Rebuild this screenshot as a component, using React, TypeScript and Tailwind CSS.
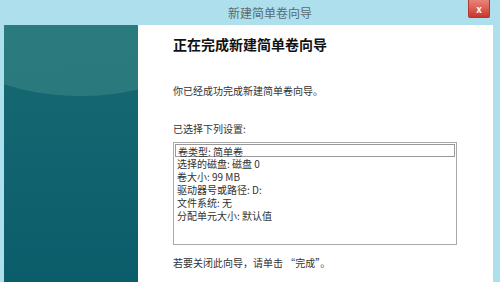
import React from "react";

const rows = ["卷类型: 简单卷", "选择的磁盘: 磁盘 0", "卷大小: 99 MB", "驱动器号或路径: D:", "文件系统: 无", "分配单元大小: 默认值"];

export default function App() {
  return (
    <div
      className="w-[500px] h-[282px] overflow-hidden bg-[#aedfec] flex flex-col"
      style={{ fontFamily: '"Microsoft YaHei", "Noto Sans CJK SC", "Liberation Sans", sans-serif' }}
    >
      <div className="h-[25px] flex items-center relative shrink-0">
        <div className="flex-1 text-center text-[12px] text-[#5a6a70] pl-[40px]">新建简单卷向导</div>
        <div className="absolute right-[10px] top-0 w-[22px] h-[18px] bg-gradient-to-b from-[#e8837a] to-[#c9342a] rounded-b-[2px] flex items-center justify-center border border-[#b03a30] border-t-0">
          <span className="text-white text-[10px] font-bold leading-none">x</span>
        </div>
      </div>
      <div className="flex-1 flex pl-[4px] pr-[7px]">
        <div className="w-[134px] shrink-0 relative overflow-hidden bg-gradient-to-b from-[#176a73] to-[#0c5d6b]">
          <div className="absolute left-[-120px] top-[-260px] w-[420px] h-[330px] rounded-[50%] bg-gradient-to-b from-[#2f7e80] to-[#2a7a7d] -rotate-[8deg]" />
        </div>
        <div className="flex-1 bg-white pl-[35px] pr-[36px] pt-[10px] text-[#333] text-[10px]">
          <div className="text-[14px] font-bold text-[#111] leading-[18px]">正在完成新建简单卷向导</div>
          <div className="mt-[31px] leading-[14px]">你已经成功完成新建简单卷向导。</div>
          <div className="mt-[24px] leading-[14px]">已选择下列设置:</div>
          <div className="mt-[6px] h-[103px] border border-[#aaaaaa] px-[1px] pt-[1px]">
            {rows.map((r, i) => (
              <div
                key={i}
                className={`h-[13px] leading-[13px] pl-[2px] text-[10px] ${i === 0 ? "border border-[#999] leading-[11px]" : ""}`}
              >
                {r}
              </div>
            ))}
          </div>
          <div className="mt-[11px] leading-[14px]">若要关闭此向导，请单击 “完成”。</div>
        </div>
      </div>
    </div>
  );
}
